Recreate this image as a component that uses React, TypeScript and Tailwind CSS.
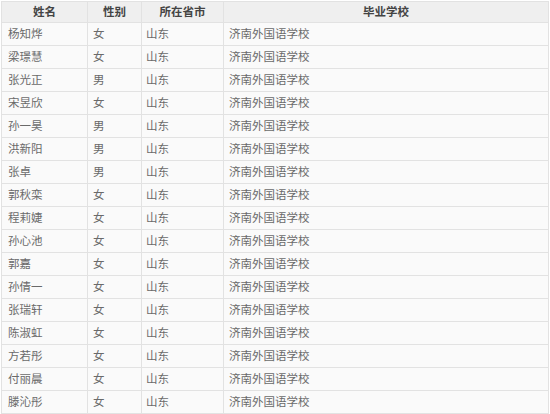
const rows: [string, string][] = [
  ['杨知烨', '女'],
  ['梁璟慧', '女'],
  ['张光正', '男'],
  ['宋昱欣', '女'],
  ['孙一昊', '男'],
  ['洪新阳', '男'],
  ['张卓', '男'],
  ['郭秋栾', '女'],
  ['程莉婕', '女'],
  ['孙心池', '女'],
  ['郭嘉', '女'],
  ['孙倩一', '女'],
  ['张瑞轩', '女'],
  ['陈淑虹', '女'],
  ['方若彤', '女'],
  ['付丽晨', '女'],
  ['滕沁彤', '女'],
];

export default function App() {
  return (
    <div className="w-[550px] h-[414px] overflow-hidden bg-white pl-px pt-px font-['Microsoft_YaHei','Noto_Sans_CJK_SC',sans-serif] text-[11.5px]">
      <table className="w-[548px] border-collapse table-fixed">
        <colgroup>
          <col className="w-[86px]" />
          <col className="w-[54px]" />
          <col className="w-[82px]" />
          <col />
        </colgroup>
        <thead>
          <tr className="h-[21px] bg-[#efefef] text-[#444]">
            <th className="border border-[#e2e2e2] font-bold">姓名</th>
            <th className="border border-[#e2e2e2] font-bold">性别</th>
            <th className="border border-[#e2e2e2] font-bold">所在省市</th>
            <th className="border border-[#e2e2e2] font-bold">毕业学校</th>
          </tr>
        </thead>
        <tbody>
          {rows.map(([name, sex]) => (
            <tr key={name} className="h-[23px] bg-[#fafafa] text-[#6a6a6a]">
              <td className="border border-[#e2e2e2] pl-[6px]">{name}</td>
              <td className="border border-[#e2e2e2] pl-[5px]">{sex}</td>
              <td className="border border-[#e2e2e2] pl-[4px]">山东</td>
              <td className="border border-[#e2e2e2] pl-[5px]">济南外国语学校</td>
            </tr>
          ))}
        </tbody>
      </table>
    </div>
  );
}
